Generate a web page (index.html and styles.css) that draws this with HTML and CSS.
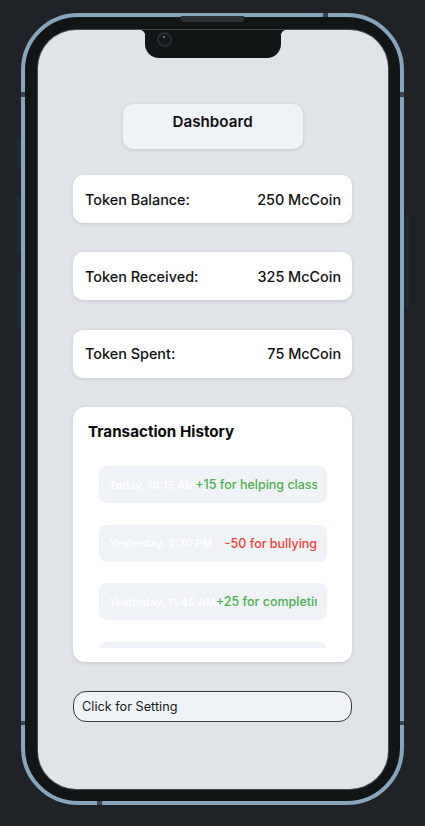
FILE: index.html
```html
<!DOCTYPE html>
<html lang="en">
<head>
<meta charset="utf-8">
<title>Dashboard</title>
<link rel="stylesheet" href="styles.css">
</head>
<body>
  <div class="phone">
    <span class="speaker"></span>
    <span class="side-btn btn-a"></span>
    <span class="side-btn btn-b"></span>
    <span class="side-btn btn-c"></span>
    <span class="side-btn btn-d"></span>
    <span class="band band-top"></span>
    <span class="band band-l1"></span>
    <span class="band band-r1"></span>
    <span class="band band-l2"></span>
    <span class="band band-r2"></span>
    <span class="band band-bottom"></span>

    <div class="screen">
      <div class="notch"><span class="camera"></span></div>

      <div class="header">Dashboard</div>

      <div class="content">
        <div class="stat-card">
          <span>Token Balance:</span>
          <span>250 McCoin</span>
        </div>
        <div class="stat-card">
          <span>Token Received:</span>
          <span>325 McCoin</span>
        </div>
        <div class="stat-card">
          <span>Token Spent:</span>
          <span>75 McCoin</span>
        </div>

        <div class="history-card">
          <h2 class="history-title">Transaction History</h2>
          <div class="history-list">
            <div class="tx">
              <span class="tx-date">Today, 10:15 AM</span>
              <span class="tx-amount plus">+15 for helping class</span>
            </div>
            <div class="tx">
              <span class="tx-date">Yesterday, 2:30 PM</span>
              <span class="tx-amount minus">-50 for bullying</span>
            </div>
            <div class="tx">
              <span class="tx-date">Yesterday, 11:45 AM</span>
              <span class="tx-amount plus">+25 for completing homework</span>
            </div>
            <div class="tx">
              <span class="tx-date">Monday, 9:00 AM</span>
              <span class="tx-amount plus">+10 for attendance</span>
            </div>
          </div>
        </div>

        <button class="settings-btn" type="button">Click for Setting</button>
      </div>
    </div>
  </div>
</body>
</html>
```

FILE: styles.css
```css
* { box-sizing: border-box; }

html, body {
  margin: 0;
  background: #1f2327;
}

body {
  padding: 13px 0 0 21px;
  min-height: 826px;
  font-family: Inter, "Noto Sans", "Liberation Sans", sans-serif;
}

.phone {
  position: relative;
  width: 383px;
  height: 792px;
  border: 4px solid #87a6be;
  border-radius: 57px;
  background: #121516;
  padding: 13px 12.5px 12px 12.7px;
}

.speaker {
  position: absolute;
  left: 156px;
  top: -1px;
  width: 63px;
  height: 6px;
  border-radius: 0 0 4px 4px;
  background: #2c3135;
}

.side-btn {
  position: absolute;
  background: #1c2b37;
  border-radius: 1px;
}
.btn-a { left: -8px; top: 121px; width: 3px; height: 29px; }
.btn-b { left: -8px; top: 180px; width: 3px; height: 55px; }
.btn-c { left: -8px; top: 255px; width: 3px; height: 56px; }
.btn-d { left: 380px; top: 198px; width: 4px; height: 93px; }

.band {
  position: absolute;
  background: #39444e;
}
.band-top { left: 298px; top: -4px; width: 5px; height: 4px; }
.band-l1 { left: -4px; top: 75px; width: 4px; height: 5px; }
.band-r1 { left: 375px; top: 75px; width: 4px; height: 5px; }
.band-l2 { left: -4px; top: 704px; width: 4px; height: 4px; }
.band-r2 { left: 375px; top: 704px; width: 4px; height: 4px; }
.band-bottom { left: 72px; top: 784px; width: 5px; height: 4px; }

.screen {
  position: relative;
  height: 100%;
  border-radius: 38px;
  background: #e0e3e7;
  box-shadow: 0 0 0 1px rgba(110, 115, 120, 0.55);
  display: flex;
  flex-direction: column;
  align-items: center;
  padding-top: 74px;
  overflow: hidden;
}

.notch {
  position: absolute;
  left: 107.3px;
  top: 0;
  width: 136.5px;
  height: 28px;
  background: #121516;
  border-radius: 0 0 14px 14px;
}
.notch::before,
.notch::after {
  content: "";
  position: absolute;
  top: 0;
  width: 5px;
  height: 5px;
}
.notch::before {
  left: -5px;
  background: radial-gradient(circle at 0 100%, transparent 4.6px, #121516 5.2px);
}
.notch::after {
  right: -5px;
  background: radial-gradient(circle at 100% 100%, transparent 4.6px, #121516 5.2px);
}

.camera {
  position: absolute;
  left: 12px;
  top: 2px;
  width: 15px;
  height: 15px;
  border-radius: 50%;
  background: #15181b;
  border: 2px solid #2a2e32;
}
.camera::after {
  content: "";
  position: absolute;
  left: 4.5px;
  top: 2px;
  width: 1.5px;
  height: 1.5px;
  border-radius: 50%;
  background: #7b8288;
}

.header {
  width: 180px;
  height: 45px;
  padding-top: 8px;
  margin-bottom: 26px;
  border-radius: 10px;
  background: #eff2f7;
  box-shadow: 0 1px 4px rgba(0, 0, 0, 0.12);
  text-align: center;
  font-size: 15.2px;
  font-weight: 600;
  line-height: 20px;
  color: #111;
}

.content {
  width: 279px;
  display: flex;
  flex-direction: column;
  gap: 29.3px;
}

.stat-card {
  height: 48px;
  display: flex;
  align-items: center;
  justify-content: space-between;
  padding: 0 11px 0 12px;
  border-radius: 10px;
  background: #fff;
  box-shadow: 0 1px 4px rgba(0, 0, 0, 0.12);
  font-size: 14.4px;
  font-weight: 500;
  color: #111;
}

.history-card {
  height: 255px;
  padding: 15.5px 15px 0;
  border-radius: 12px;
  background: #fff;
  box-shadow: 0 1px 4px rgba(0, 0, 0, 0.12);
}

.history-title {
  margin: 0;
  font-size: 15.2px;
  font-weight: 700;
  line-height: 20px;
  color: #0b0b0b;
}

.history-list {
  margin-top: 13.8px;
  height: 192px;
  overflow: hidden;
  padding: 10px 10px 0 11px;
  display: flex;
  flex-direction: column;
  gap: 21.5px;
}

.tx {
  flex: none;
  height: 37px;
  display: flex;
  align-items: center;
  justify-content: space-between;
  padding: 0 10px;
  border-radius: 8px;
  background: #eff2f7;
  white-space: nowrap;
}

.tx-date {
  flex: none;
  font-size: 11px;
  font-weight: 600;
  color: #ffffff;
}

.tx-amount {
  flex: 0 1 auto;
  min-width: 0;
  overflow: hidden;
  text-align: right;
  font-size: 12.5px;
  font-weight: 500;
}
.tx-amount.plus { color: #4caf50; }
.tx-amount.minus { color: #f44336; }

.settings-btn {
  height: 31px;
  width: 100%;
  padding: 0 8px;
  border: 1px solid #3a3a3a;
  border-radius: 13px;
  background: #eff2f7;
  text-align: left;
  font-family: Inter, "Noto Sans", "Liberation Sans", sans-serif;
  font-size: 12.7px;
  color: #1a1a1a;
}
```
